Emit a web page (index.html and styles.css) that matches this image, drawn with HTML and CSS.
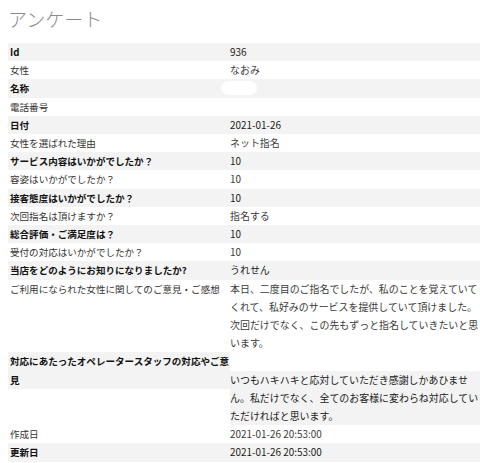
FILE: index.html
```html
<!DOCTYPE html>
<html lang="ja">
<head>
<meta charset="utf-8">
<title>アンケート</title>
<link rel="stylesheet" href="styles.css">
</head>
<body>
<h1 class="title">アンケート</h1>
<div class="sheet">
  <div class="row"><div class="label">Id</div><div class="value">936</div></div>
  <div class="row"><div class="label">女性</div><div class="value">なおみ</div></div>
  <div class="row"><div class="label">名称</div><div class="value"><span class="blot"></span></div></div>
  <div class="row"><div class="label">電話番号</div><div class="value"></div></div>
  <div class="row"><div class="label">日付</div><div class="value">2021-01-26</div></div>
  <div class="row"><div class="label">女性を選ばれた理由</div><div class="value">ネット指名</div></div>
  <div class="row"><div class="label">サービス内容はいかがでしたか？</div><div class="value">10</div></div>
  <div class="row"><div class="label">容姿はいかがでしたか？</div><div class="value">10</div></div>
  <div class="row"><div class="label">接客態度はいかがでしたか？</div><div class="value">10</div></div>
  <div class="row"><div class="label">次回指名は頂けますか？</div><div class="value">指名する</div></div>
  <div class="row"><div class="label">総合評価・ご満足度は？</div><div class="value">10</div></div>
  <div class="row"><div class="label">受付の対応はいかがでしたか？</div><div class="value">10</div></div>
  <div class="row"><div class="label">当店をどのようにお知りになりましたか?</div><div class="value">うれせん</div></div>
  <div class="row"><div class="label">ご利用になられた女性に関してのご意見・ご感想</div><div class="value">本日、二度目のご指名でしたが、私のことを覚えていてくれて、私好みのサービスを提供していて頂けました。次回だけでなく、この先もずっと指名していきたいと思います。</div></div>
  <div class="row row-long"><div class="label">対応にあたったオペレータースタッフの対応やご意見</div><div class="value">いつもハキハキと応対していただき感謝しかあひません。私だけでなく、全てのお客様に変わらね対応していただければと思います。</div></div>
  <div class="row"><div class="label">作成日</div><div class="value">2021-01-26 20:53:00</div></div>
  <div class="row"><div class="label">更新日</div><div class="value">2021-01-26 20:53:00</div></div>
</div>
</body>
</html>
```

FILE: styles.css
```css
html, body {
  background: #fff;
}
body {
  margin: 8px 0 0 8px;
  font-family: "Noto Sans CJK JP", "Noto Sans", sans-serif;
  color: #333;
}
.title {
  margin: 0 0 13px 0;
  font-size: 19px;
  line-height: 22px;
  font-weight: 300;
  color: #8a8a8a;
}
.sheet {
  display: flex;
  flex-direction: column;
}
.row {
  display: grid;
  grid-template-columns: 222px 1fr;
  align-items: start;
  line-height: 18.2px;
}
.label {
  padding-left: 2px;
  font-size: 9.55px;
  color: #333;
}
.value {
  position: relative;
  font-size: 9.95px;
  min-height: 18.2px;
  color: #3a3a3a;
}
.row:nth-child(odd) .label,
.row:nth-child(odd) .value {
  background: #f3f3f3;
}
.row:nth-child(odd) .label {
  font-weight: 700;
  color: #111;
}
.row:nth-child(odd) .value {
  color: #1a1a1a;
}
.row-long .value {
  margin-top: 18.2px;
}
.blot {
  position: absolute;
  left: -9px;
  top: 2px;
  width: 36px;
  height: 14px;
  border-radius: 7px;
  background: #fff;
}
```
